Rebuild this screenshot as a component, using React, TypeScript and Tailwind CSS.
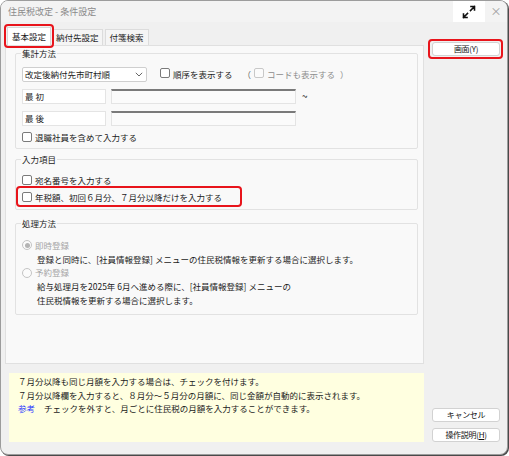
import React from "react";

const font = { fontFamily: '"Noto Sans CJK JP", "Noto Sans", sans-serif' };

function Check({ disabled }: { disabled?: boolean }) {
  return (
    <span
      className={`inline-block w-[10px] h-[10px] rounded-[2px] border ${
        disabled ? "border-[#c8c8c8] bg-[#fbfbfb]" : "border-[#7a7a7a] bg-white"
      }`}
    />
  );
}

function Radio({ checked }: { checked?: boolean }) {
  return (
    <span className="inline-flex items-center justify-center w-[10px] h-[10px] rounded-full border border-[#c4c4c4] bg-[#fbfbfb]">
      {checked && <span className="w-[5px] h-[5px] rounded-full bg-[#b4b4b4]" />}
    </span>
  );
}

function Group({ title, className, children }: { title: string; className?: string; children: React.ReactNode }) {
  return (
    <fieldset className={`border border-[#e2e2e2] rounded-[2px] px-[6px] ${className ?? ""}`}>
      <legend className="px-[1px] ml-[-1px] leading-[10px] text-[#222]">{title}</legend>
      {children}
    </fieldset>
  );
}

function Btn({ label }: { label: React.ReactNode }) {
  return (
    <div className="w-[68px] h-[14px] flex items-center justify-center bg-white border border-[#d2d2d2] rounded-[3px] text-[8px] text-[#111] tracking-[-0.3px]">
      {label}
    </div>
  );
}

export default function App() {
  return (
    <div className="w-[509px] h-[456px] bg-white text-[8.5px] text-[#1b1b1b]" style={font}>
      <div className="w-[508px] h-[455px] rounded-[8px] border border-[#9c9c9c] bg-[#f0f0f0] flex flex-col overflow-hidden shadow-[1px_1px_0_#4a4a4a]">
        {/* title bar */}
        <div className="h-[21px] flex items-center bg-[#f3f3f3] shrink-0">
          <span className="ml-[7px] text-[#8a8a8a] text-[9px]">住民税改定 - 条件設定</span>
          <div className="ml-auto h-[21px] w-[32px] bg-white flex items-center justify-center">
            <svg width="16" height="16" viewBox="0 0 16 16" fill="none" stroke="#111" strokeWidth="1.6" strokeLinecap="square">
              <path d="M9.5 6.5 L13.5 2.5 M10 2.5 H13.5 V6" />
              <path d="M6.5 9.5 L2.5 13.5 M2.5 10 V13.5 H6" />
            </svg>
          </div>
          <span className="w-[22px] text-center text-[#9a9a9a] text-[11px] leading-none">×</span>
        </div>

        {/* body */}
        <div className="flex flex-1">
          <div className="w-[419px] ml-[4px] flex flex-col">
            {/* tabs */}
            <div className="h-[22px] flex items-end mt-[1px] pl-[2px]">
              <div className="relative h-[18px] px-[4px] flex items-center bg-white border border-b-0 border-[#d8d8d8] z-10">
                基本設定
                <span className="absolute left-[-4px] top-[-4px] right-[-4px] bottom-[-3px] border-[2.5px] border-[#e8141b] rounded-[4px]" />
              </div>
              <div className="h-[16px] px-[3px] flex items-center bg-[#f5f5f5] border border-b-0 border-[#dcdcdc] ml-[1px]">
                納付先設定
              </div>
              <div className="h-[16px] px-[4px] flex items-center bg-[#f5f5f5] border border-b-0 border-[#dcdcdc] ml-[2px]">
                付箋検索
              </div>
            </div>

            {/* panel */}
            <div className="h-[319px] bg-[#f9f9f9] border border-[#e0e0e0] pl-[9px] pr-[5px] pt-[2px]">
              <Group title="集計方法" className="h-[101px]">
                <div className="flex items-center mt-[9px] h-[15px]">
                  <div className="w-[125px] h-[15px] bg-white border border-[#cfcfcf] rounded-[2px] flex items-center pl-[2px] pr-[3px]">
                    <span>改定後納付先市町村順</span>
                    <svg className="ml-auto" width="8" height="5" viewBox="0 0 8 5" fill="none" stroke="#555" strokeWidth="0.9">
                      <path d="M0.8 0.8 L4 4 L7.2 0.8" />
                    </svg>
                  </div>
                  <span className="ml-[13px]"><Check /></span>
                  <span className="ml-[3px]">順序を表示する</span>
                  <span className="ml-[10px] text-[#666]">（</span>
                  <span className="ml-[3px]"><Check disabled /></span>
                  <span className="ml-[3px] text-[#8d8d8d]">コードも表示する</span>
                  <span className="ml-[5px] text-[#8d8d8d]">）</span>
                </div>
                <div className="flex items-center mt-[7px] h-[15px]">
                  <div className="w-[84px] h-[15px] bg-white border border-[#e4e4e4] flex items-center pl-[2px]">最 初</div>
                  <div className="ml-[5px] w-[185px] h-[15px] bg-[#fbfbfb] border border-[#e4e4e4] border-t-[2px] border-t-[#7a7a7a]" />
                  <span className="ml-[6px] mt-[-2px] text-[10px] leading-none">~</span>
                </div>
                <div className="flex items-center mt-[7px] h-[15px]">
                  <div className="w-[84px] h-[15px] bg-white border border-[#e4e4e4] flex items-center pl-[2px]">最 後</div>
                  <div className="ml-[5px] w-[185px] h-[15px] bg-[#fbfbfb] border border-[#e4e4e4] border-t-[2px] border-t-[#7a7a7a]" />
                </div>
                <div className="flex items-center mt-[5px] h-[12px]">
                  <Check />
                  <span className="ml-[3px]">退職社員を含めて入力する</span>
                </div>
              </Group>

              <Group title="入力項目" className="mt-[5px] h-[56px]">
                <div className="flex items-center mt-[10px] h-[12px]">
                  <Check />
                  <span className="ml-[3px]">宛名番号を入力する</span>
                </div>
                <div className="relative flex items-center mt-[5px] h-[12px]">
                  <Check />
                  <span className="ml-[3px]">年税額、初回６月分、７月分以降だけを入力する</span>
                  <span className="absolute left-[-6px] top-[-5px] w-[226px] h-[21px] border-[2.5px] border-[#e8141b] rounded-[4px]" />
                </div>
              </Group>

              <Group title="処理方法" className="mt-[8px] h-[97px]">
                <div className="flex items-center mt-[11px] h-[12px] text-[#a5a5a5]">
                  <Radio checked />
                  <span className="ml-[3px]">即時登録</span>
                </div>
                <div className="ml-[15px] mt-[2px] leading-[13px]">
                  登録と同時に、[社員情報登録] メニューの住民税情報を更新する場合に選択します。
                </div>
                <div className="flex items-center mt-[0px] h-[13px] text-[#a5a5a5]">
                  <Radio />
                  <span className="ml-[3px]">予約登録</span>
                </div>
                <div className="ml-[15px] mt-[1px] leading-[13.5px]">
                  給与処理月を2025年 6月へ進める際に、[社員情報登録] メニューの
                  <br />
                  住民税情報を更新する場合に選択します。
                </div>
              </Group>
            </div>

            {/* help */}
            <div className="mt-[9px] ml-[4px] h-[69px] bg-[#ffffe0] pl-[9px] pt-[2px] leading-[13.5px]">
              <div>７月分以降も同じ月額を入力する場合は、チェックを付けます。</div>
              <div>７月分以降欄を入力すると、８月分～５月分の月額に、同じ金額が自動的に表示されます。</div>
              <div className="flex">
                <span className="text-[#2f3cff] w-[26px]">参考</span>
                <span>チェックを外すと、月ごとに住民税の月額を入力することができます。</span>
              </div>
            </div>
          </div>

          {/* right buttons */}
          <div className="ml-[8px] flex flex-col">
            <div className="relative mt-[20px]">
              <Btn label="画面(Y)" />
              <span className="absolute left-[-4px] top-[-3px] w-[75px] h-[20px] border-[2.5px] border-[#e8141b] rounded-[4px]" />
            </div>
            <div className="mt-[352px]">
              <Btn label="キャンセル" />
            </div>
            <div className="mt-[6px]">
              <Btn label={<span>操作説明(<span className="underline">H</span>)</span>} />
            </div>
          </div>
        </div>
      </div>
    </div>
  );
}
